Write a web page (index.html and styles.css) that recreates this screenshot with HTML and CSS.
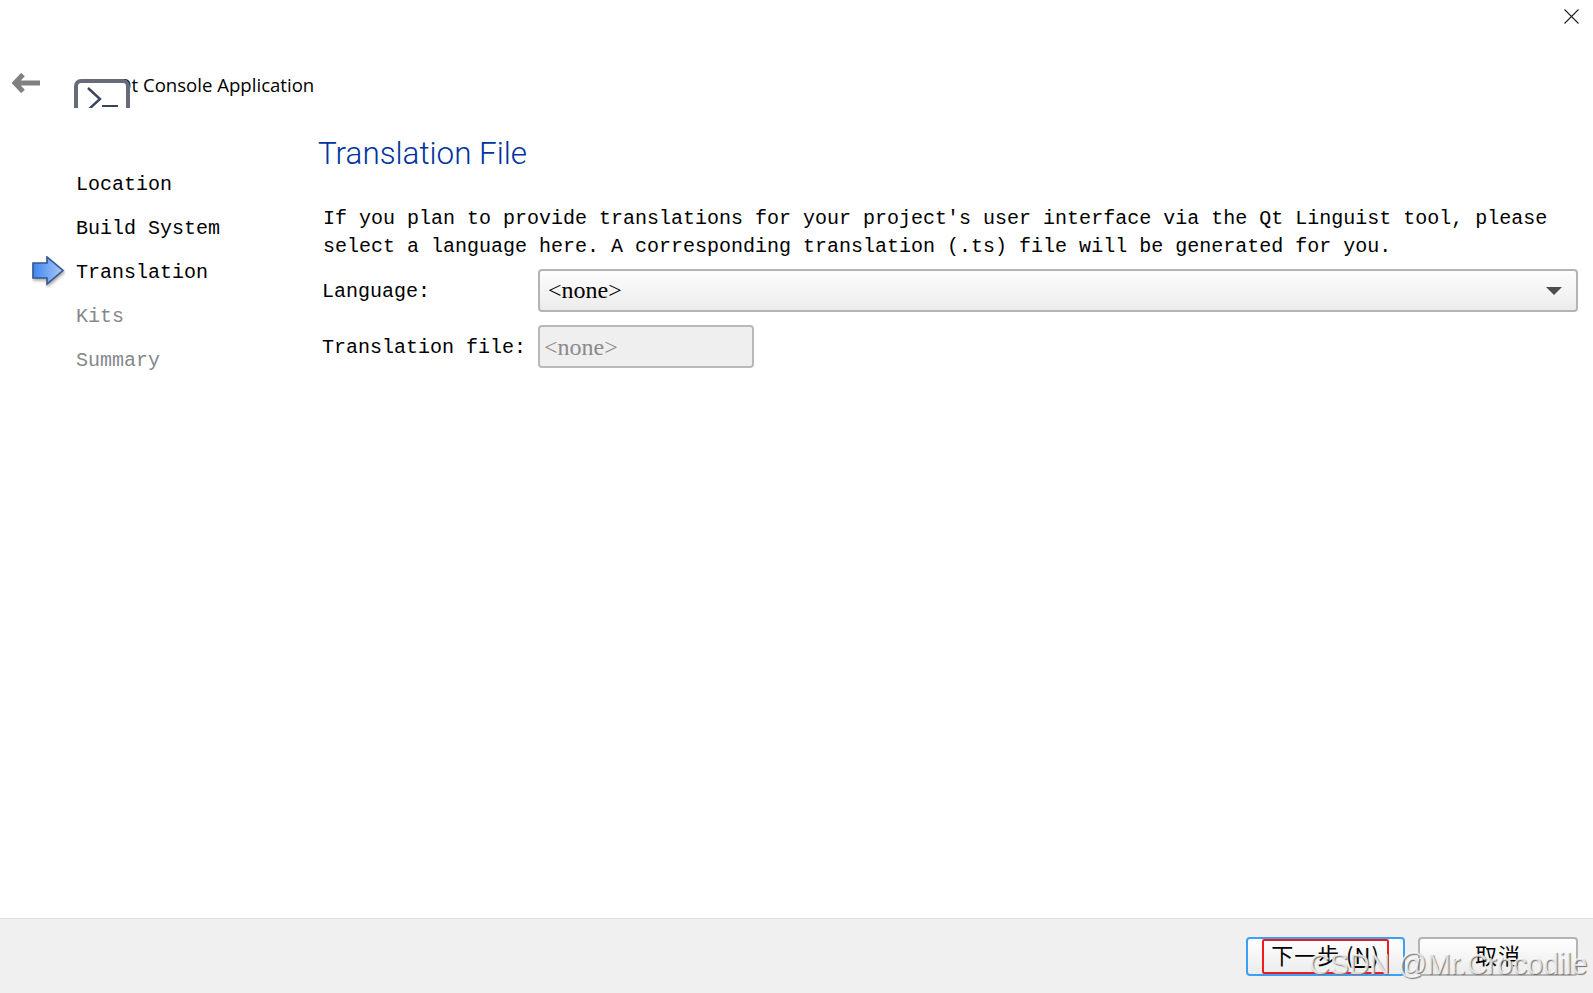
FILE: index.html
```html
<!DOCTYPE html>
<html lang="en">
<head>
	<meta charset="UTF-8">
	<title>Qt Console Application</title>
	<link rel="stylesheet" href="styles.css">
</head>
<body>
	<div class="wizard">
		<div class="topbar">
			<svg class="close" width="15" height="15" viewBox="0 0 15 15">
				<path d="M0.5 0.5L14.5 14.5M14.5 0.5L0.5 14.5" fill="none" stroke="#222" stroke-width="1.1"/>
			</svg>
		</div>
		<div class="head">
			<svg class="back" width="28" height="20" viewBox="0 0 28 20">
				<path d="M28 10H4M11 1.5L3 10L11 18.5" fill="none" stroke="#808080" stroke-width="5"/>
			</svg>
			<svg class="appicon" width="56" height="29" viewBox="0 0 56 29">
				<rect x="2" y="2" width="52" height="44" rx="5" fill="#fff" stroke="#666b7a" stroke-width="4"/>
				<path d="M14 9L26 20L14 31" fill="none" stroke="#3c4358" stroke-width="2.4"/>
				<path d="M28 27H44" fill="none" stroke="#3c4358" stroke-width="2"/>
			</svg>
			<div class="apptitle">Qt Console Application</div>
		</div>
		<div class="main">
			<ul class="steps">
				<li class="step">Location</li>
				<li class="step">Build System</li>
				<li class="step current">
					<svg class="marker" width="34" height="32" viewBox="0 0 34 32">
						<defs>
							<linearGradient id="arrowfill" x1="0" x2="1" y1="0" y2="0">
								<stop offset="0" stop-color="#3f87f0"/>
								<stop offset="1" stop-color="#a9c9f5"/>
							</linearGradient>
						</defs>
						<path d="M1 7H15V1L31 14.5L15 28V22H1Z" fill="url(#arrowfill)" stroke="#34588f" stroke-width="1.6" filter="drop-shadow(1px 2px 1.5px #aaa)"/>
					</svg>
					Translation
				</li>
				<li class="step off">Kits</li>
				<li class="step off">Summary</li>
			</ul>
			<div class="page">
				<h1 class="pagetitle">Translation File</h1>
				<p class="desc">If you plan to provide translations for your project's user interface via the Qt Linguist tool, please select a language here. A corresponding translation (.ts) file will be generated for you.</p>
				<div class="form">
					<label class="lbl">Language:</label>
					<div class="combo">
						<span>&lt;none&gt;</span>
						<span class="caret"></span>
					</div>
					<label class="lbl">Translation file:</label>
					<div class="readonly">&lt;none&gt;</div>
				</div>
			</div>
		</div>
		<div class="footer">
			<button class="btn btn-next"><span class="redbox">下一步 (<u>N</u>)</span></button>
			<button class="btn">取消</button>
		</div>
		<div class="watermark">CSDN @Mr.Crocodile</div>
	</div>
</body>
</html>
```

FILE: styles.css
```css
* {
	margin: 0;
	padding: 0;
	box-sizing: border-box;
}

body {
	background: #fff;
	color: #000;
	overflow: hidden;
	font-family: "Liberation Mono", "Noto Sans CJK SC", monospace;
	font-size: 20px;
}

.wizard {
	position: relative;
	height: 993px;
	display: flex;
	flex-direction: column;
}

.topbar {
	height: 73px;
	display: flex;
	justify-content: flex-end;
	padding: 9px 14px 0 0;
}

.head {
	height: 34px;
	display: flex;
	align-items: flex-start;
	padding-left: 12px;
}

.back {
	margin-right: 34px;
}

.appicon {
	margin-top: 6px;
	position: relative;
	z-index: 1;
}

.apptitle {
	margin-left: -13px;
	font-family: "Open Sans", "Liberation Sans", sans-serif;
	font-size: 18.6px;
	line-height: 24px;
}

.main {
	flex: 1;
	display: flex;
}

.steps {
	list-style: none;
	width: 318px;
	padding: 56px 0 0 76px;
}

.step {
	position: relative;
	height: 44px;
	line-height: 44px;
}

.step.off {
	color: #85888c;
}

.marker {
	position: absolute;
	left: -44px;
	top: 5px;
}

.page {
	flex: 1;
	padding-right: 15px;
}

.pagetitle {
	font-family: Roboto, "Liberation Sans", sans-serif;
	font-size: 31.4px;
	font-weight: 300;
	line-height: 42px;
	color: #0033a0;
	margin-top: 26px;
}

.desc {
	margin: 30px 0 0 5px;
	line-height: 28px;
}

.form {
	display: grid;
	grid-template-columns: 216px 1fr;
	align-items: center;
	row-gap: 13px;
	margin: 8px 0 0 4px;
}

.lbl {
	padding-top: 2px;
}

.combo {
	height: 43px;
	display: flex;
	align-items: center;
	justify-content: space-between;
	padding: 0 14px 0 8px;
	border: 2px solid #b4b4b4;
	border-radius: 4px;
	background: linear-gradient(#fdfdfd, #ececec);
	font-family: "Liberation Serif", "Noto Sans CJK SC", serif;
	font-size: 24px;
}

.caret {
	width: 0;
	height: 0;
	border-left: 8px solid transparent;
	border-right: 8px solid transparent;
	border-top: 8px solid #4d4d4d;
}

.readonly {
	width: 216px;
	height: 43px;
	line-height: 40px;
	padding-left: 4px;
	border: 2px solid #b9b9b9;
	border-radius: 4px;
	background: #efefef;
	color: #8a8a8a;
	font-family: "Liberation Serif", "Noto Sans CJK SC", serif;
	font-size: 24px;
}

.footer {
	height: 75px;
	border-top: 1px solid #dfdfdf;
	background: #f0f0f0;
	display: flex;
	justify-content: flex-end;
	gap: 13px;
	padding: 18px 15px 0 0;
}

.btn {
	width: 160px;
	height: 39px;
	border: 2px solid #b4b4b4;
	border-radius: 4px;
	background: linear-gradient(#fefefe, #ececec);
	font-family: "Noto Sans CJK SC", sans-serif;
	font-size: 22px;
	line-height: 30px;
	letter-spacing: 1px;
	color: #000;
	padding-bottom: 7px;
}

.btn-next {
	width: 159px;
	border-color: #3ba0f5;
	display: flex;
	justify-content: flex-end;
	align-items: center;
	padding: 0 14px 0 0;
}

.redbox {
	width: 127px;
	height: 35px;
	line-height: 26px;
	border: 2px solid #f01c1c;
	border-radius: 2px;
	white-space: nowrap;
}

.watermark {
	position: absolute;
	left: 1309px;
	top: 948px;
	font-family: "Liberation Sans", sans-serif;
	font-size: 28.6px;
	line-height: 32px;
	white-space: nowrap;
	color: rgba(255, 255, 255, 0.75);
	text-shadow: 1px 1px 1px #777;
}
```
